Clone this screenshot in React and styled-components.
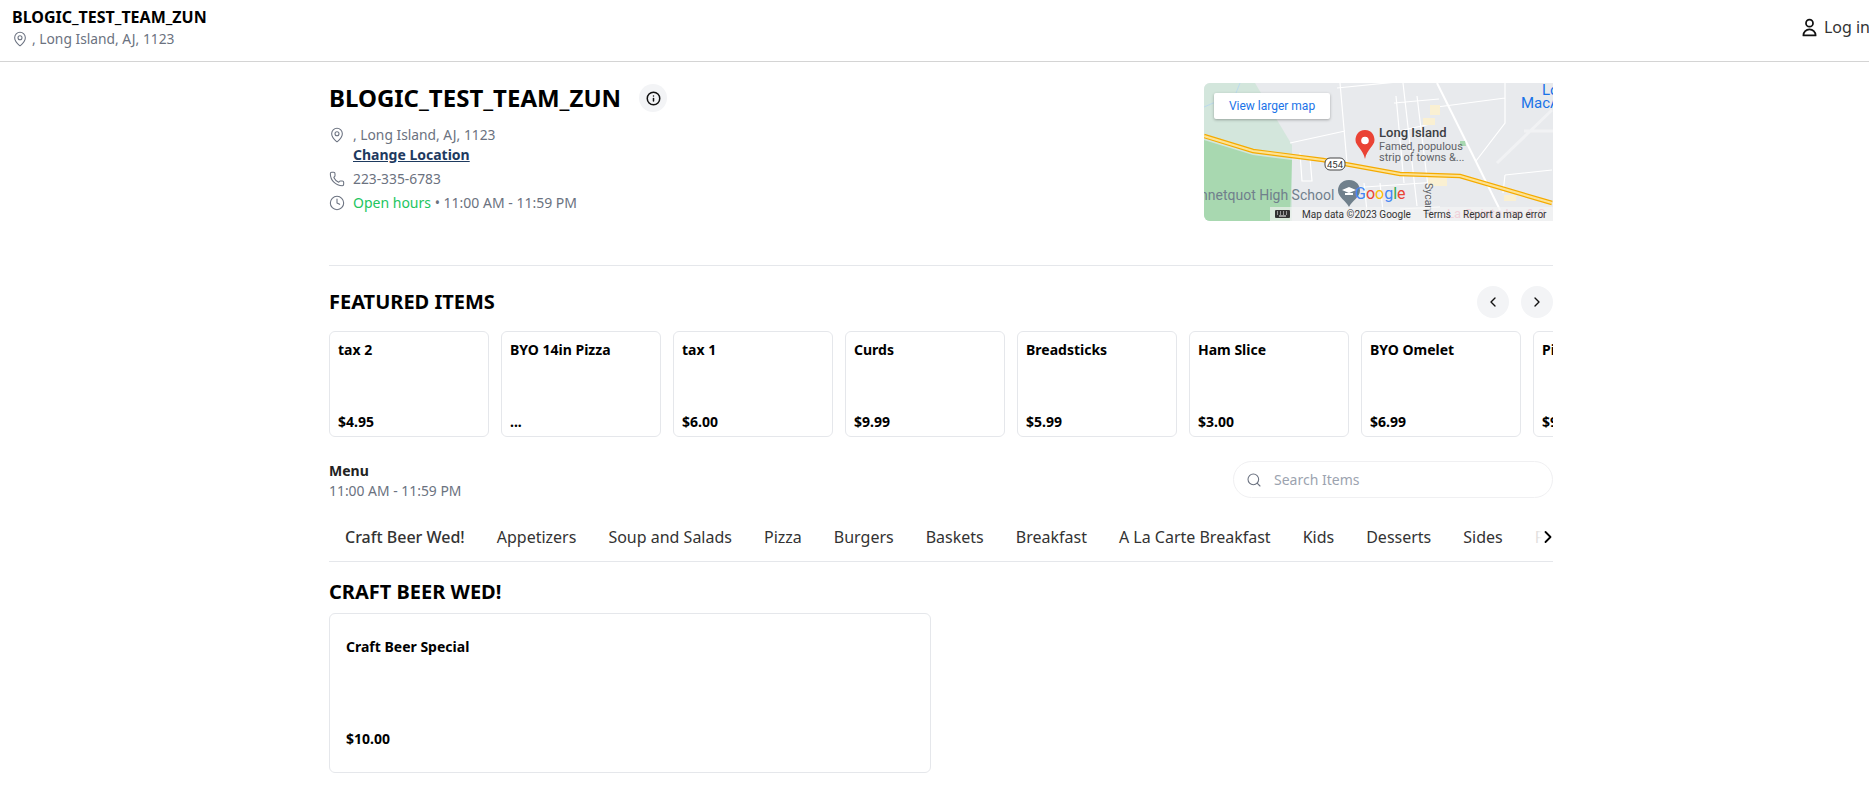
import React from 'react'
import styled, { createGlobalStyle } from 'styled-components'
import { ChevronLeft, ChevronRight, Clock, Info, MapPin, Phone, Search } from 'lucide-react'

const GlobalStyle = createGlobalStyle`
  html, body {
    margin: 0;
    padding: 0;
    background: #fff;
    overflow: hidden;
    font-family: "Noto Sans", "Open Sans", sans-serif;
    color: #000;
  }
`

const Header = styled.header`
  height: 61px;
  border-bottom: 1px solid #d4d4d4;
  display: flex;
  align-items: center;
  justify-content: space-between;
  padding-left: 12px;
  overflow: hidden;
`

const HeaderInfo = styled.div`
  display: flex;
  flex-direction: column;
  gap: 1px;
  margin-top: -6px;
`

const HeaderTitle = styled.div`
  font-size: 16px;
  line-height: 22px;
  font-weight: 700;
`

const HeaderAddress = styled.div`
  display: flex;
  align-items: center;
  gap: 4px;
  font-size: 13.8px;
  line-height: 20px;
  color: #6b7280;
`

const LoginLink = styled.div`
  display: flex;
  align-items: center;
  gap: 4px;
  font-size: 16px;
  color: #333;
  margin-right: -1px;
  margin-top: -7px;
  flex-shrink: 0;
`

const Page = styled.main`
  width: 1224px;
  margin-left: 329px;
`

const StoreInfo = styled.section`
  display: flex;
  justify-content: space-between;
  padding-top: 22px;
  height: 181px;
  box-sizing: content-box;
  border-bottom: 1px solid #e5e7eb;
`

const StoreHeading = styled.div`
  display: flex;
  align-items: center;
  gap: 18px;
  margin-bottom: 13px;
`

const StoreTitle = styled.h1`
  margin: 0;
  font-size: 24px;
  line-height: 28px;
  font-weight: 700;
`

const RoundButton = styled.button`
  width: ${({ size }) => size}px;
  height: ${({ size }) => size}px;
  border: 0;
  padding: 0;
  border-radius: 50%;
  background: #f3f4f6;
  color: #111;
  display: flex;
  align-items: center;
  justify-content: center;
`

const InfoRow = styled.div`
  display: grid;
  grid-template-columns: 24px 1fr;
  align-items: start;
  font-size: 13.8px;
  line-height: 20px;
  color: #6b7280;
  margin-bottom: 4px;
  & > svg {
    margin-top: 2px;
  }
`

const ChangeLocation = styled.a`
  display: block;
  font-weight: 700;
  font-size: 14px;
  color: #1e3a5f;
  text-decoration: underline;
`

const HoursText = styled.div`
  font-size: 14px;
`

const OpenHours = styled.span`
  color: #22c55e;
`

const MapFrame = styled.div`
  position: relative;
  width: 349px;
  height: 138px;
  margin-top: -1px;
  border-radius: 6px 0 0 6px;
  overflow: hidden;
  background: #e8eaed;
  font-family: Roboto, "Noto Sans", sans-serif;
`

const MapDrawing = styled.svg`
  display: block;
`

const LargerMap = styled.div`
  position: absolute;
  left: 10px;
  top: 10px;
  width: 116px;
  height: 26px;
  background: #fff;
  border-radius: 2px;
  box-shadow: 0 1px 3px rgba(0, 0, 0, 0.3);
  color: #1a73e8;
  font-size: 12px;
  display: flex;
  align-items: center;
  justify-content: center;
`

const MapBar = styled.div`
  position: absolute;
  right: 0;
  bottom: 0;
  width: 283px;
  height: 14px;
  background: rgba(245, 245, 245, 0.65);
  display: flex;
  align-items: center;
  padding-left: 5px;
  box-sizing: border-box;
  font-size: 10px;
  color: #333;
  white-space: nowrap;
`

const MapBarText = styled.span`
  margin-left: ${({ offset }) => offset}px;
`

const SectionHead = styled.div`
  display: flex;
  align-items: center;
  justify-content: space-between;
  height: 32px;
  margin-top: 20px;
`

const SectionTitle = styled.h2`
  margin: 0;
  font-size: 20px;
  line-height: 24px;
  font-weight: 700;
`

const CarouselButtons = styled.div`
  display: flex;
  gap: 12px;
`

const Carousel = styled.div`
  display: flex;
  gap: 12px;
  overflow: hidden;
  margin-top: 13px;
`

const ItemCard = styled.div`
  flex: 0 0 160px;
  height: 106px;
  box-sizing: border-box;
  border: 1px solid #e5e7eb;
  border-radius: 6px;
  padding: 8px 8px 4px;
  display: flex;
  flex-direction: column;
  justify-content: space-between;
  font-size: 14px;
  line-height: 20px;
  font-weight: 700;
  white-space: nowrap;
`

const MenuBar = styled.div`
  display: flex;
  justify-content: space-between;
  align-items: flex-start;
  margin-top: 24px;
`

const MenuName = styled.div`
  font-size: 14px;
  line-height: 20px;
  font-weight: 700;
  color: #222;
`

const MenuHours = styled.div`
  font-size: 13.9px;
  line-height: 20px;
  color: #6b7280;
`

const SearchBox = styled.div`
  width: 320px;
  height: 37px;
  box-sizing: border-box;
  border: 1px solid #f0f0f2;
  border-radius: 19px;
  display: flex;
  align-items: center;
  gap: 12px;
  padding-left: 12px;
  font-size: 14px;
  color: #9ca3af;
  & > svg {
    color: #6b7280;
  }
`

const Tabs = styled.nav`
  position: relative;
  display: flex;
  gap: 32px;
  height: 48px;
  margin-top: 12px;
  padding-left: 16px;
  align-items: center;
  overflow: hidden;
  border-bottom: 1px solid #e5e7eb;
  white-space: nowrap;
  font-size: 16px;
  color: #333;
`

const Tab = styled.span`
  font-weight: ${({ $active }) => ($active ? 500 : 400)};
`

const TabsMore = styled.div`
  position: absolute;
  right: -5px;
  top: 0;
  height: 47px;
  width: 26px;
  display: flex;
  align-items: center;
  justify-content: flex-end;
  color: #000;
  background: linear-gradient(to right, rgba(255, 255, 255, 0.7), #fff 40%);
`

const CategoryTitle = styled(SectionTitle)`
  margin-top: 18px;
`

const MenuCard = styled.div`
  width: 602px;
  height: 160px;
  box-sizing: border-box;
  margin-top: 9px;
  border: 1px solid #e5e7eb;
  border-radius: 6px;
  padding: 23px 16px 23px;
  display: flex;
  flex-direction: column;
  justify-content: space-between;
  font-size: 14px;
  line-height: 20px;
  font-weight: 700;
`

const featured = [
  ['tax 2', '$4.95'],
  ['BYO 14in Pizza', '...'],
  ['tax 1', '$6.00'],
  ['Curds', '$9.99'],
  ['Breadsticks', '$5.99'],
  ['Ham Slice', '$3.00'],
  ['BYO Omelet', '$6.99'],
  ['Pizza', '$9.99'],
]

const categories = ['Craft Beer Wed!', 'Appetizers', 'Soup and Salads', 'Pizza', 'Burgers', 'Baskets', 'Breakfast', 'A La Carte Breakfast', 'Kids', 'Desserts', 'Sides', 'Fountain']

const GoogleMap = () => (
  <MapDrawing width="349" height="138" viewBox="0 0 349 138">
    <path d="M0 0h51l37 62v76H0z" fill="#d3e6dc" />
    <path d="M0 57l49 15 39 5-2 61H0z" fill="#a8d8b0" />
    <path d="M0 24l14-6 16-3 6-15" stroke="#b6d7f2" strokeWidth="0.8" fill="none" />
    <g stroke="#fff" strokeWidth="1.2" fill="none">
      <path d="M136 0l7 80M86 60l55-12M96 70l2 28h10l-2-23" />
      <path d="M133 5l80-8M192 13l8 87M199 0l14 123M213 13l13 107M190 20l45-4M186 50l45-10" />
      <path d="M160 100l4 38M176 100l4 38M146 105l88-6M196 126l40-2" />
      <path d="M233 24l68-9M301 0v40l-29 38M301 92l47-5M301 92l-2 18" />
    </g>
    <path d="M233 0l63 127" stroke="#fff" strokeWidth="2" fill="none" />
    <path d="M293 80l55-53M320 48h29" stroke="#f1f2f4" strokeWidth="3" fill="none" />
    <path d="M226 22h10v10h-10zM219 35h12v7h-12zM224 94h19v9h-19zM300 112h12v6h-12z" fill="#faf0d2" />
    <path d="M256 58h5l1 5h-6z" fill="#a8d8b0" />
    <path d="M0 53l49 15 70 9 77 14 60 2 92 27" stroke="#f5ab00" strokeWidth="4.5" fill="none" />
    <path d="M0 53l49 15 70 9 77 14 60 2 92 27" stroke="#fde293" strokeWidth="2.2" fill="none" />
    <rect x="121" y="75" width="20" height="12" rx="5" fill="#fff" stroke="#444" />
    <text x="131" y="84.5" fontSize="9.5" textAnchor="middle" fill="#333">454</text>
    <path d="M161 47c-7 0-9.500 6-9.500 10 0 6 7.500 9 9.500 19 2-10 9.500-13 9.500-19 0-4-2.500-10-9.500-10z" fill="#ea4335" />
    <circle cx="161" cy="57.500" r="3.800" fill="#fff" />
    <text x="175" y="54" fontSize="13" fontWeight="500" fill="#3c4043">Long Island</text>
    <text x="175" y="67" fontSize="11" fill="#5f6368">Famed, populous</text>
    <text x="175" y="78" fontSize="11" fill="#5f6368">strip of towns &amp;...</text>
    <text x="-4" y="117" fontSize="14" fill="#70808c">nnetquot High School</text>
    <path d="M145 97c-8 0-11 6-11 10.500 0 7 8 10 11 16.500 3-6.500 11-9.500 11-16.500 0-4.500-3-10.500-11-10.500z" fill="#70808c" />
    <path d="M138 107l7-3 7 3-7 3zM141 110h8v2h-8z" fill="#fff" />
    <text x="151" y="116" fontSize="16">
      <tspan fill="#4285f4">G</tspan>
      <tspan fill="#ea4335">o</tspan>
      <tspan fill="#fbbc05">o</tspan>
      <tspan fill="#4285f4">g</tspan>
      <tspan fill="#34a853">l</tspan>
      <tspan fill="#ea4335">e</tspan>
    </text>
    <text x="338" y="12" fontSize="15" fill="#1a73e8">Lo</text>
    <text x="317" y="25" fontSize="15" fill="#1a73e8">MacA</text>
    <text transform="translate(221 100) rotate(90)" fontSize="10.500" fill="#5f6368">Sycam</text>
    <text x="243" y="135" fontSize="13" fill="#e58fa5">La Quinta Inn &amp; S</text>
  </MapDrawing>
)

const KeyboardIcon = () => (
  <svg width="15" height="8" viewBox="0 0 15 8">
    <rect width="15" height="8" rx="1" fill="#333" />
    <path d="M2 2h1M5 2h1M8 2h1M11 2h1M2 4h1M5 4h1M8 4h1M11 4h1M4 6h7" stroke="#fff" strokeWidth="1" />
  </svg>
)

const UserIcon = () => (
  <svg width="21" height="21" viewBox="0 0 24 24" fill="none" stroke="#111" strokeWidth="2" strokeLinejoin="round">
    <circle cx="12" cy="7" r="4" />
    <path d="M12 14a7 7 0 0 0-7 7h14a7 7 0 0 0-7-7z" />
  </svg>
)

const App = () => (
  <>
    <GlobalStyle />
    <Header>
      <HeaderInfo>
        <HeaderTitle>BLOGIC_TEST_TEAM_ZUN</HeaderTitle>
        <HeaderAddress>
          <MapPin size={16} strokeWidth={1.6} />
          , Long Island, AJ, 1123
        </HeaderAddress>
      </HeaderInfo>
      <LoginLink>
        <UserIcon />
        Log in
      </LoginLink>
    </Header>
    <Page>
      <StoreInfo>
        <div>
          <StoreHeading>
            <StoreTitle>BLOGIC_TEST_TEAM_ZUN</StoreTitle>
            <RoundButton size={28}><Info size={15} strokeWidth={2.4} /></RoundButton>
          </StoreHeading>
          <InfoRow>
            <MapPin size={16} strokeWidth={1.6} />
            <div>
              , Long Island, AJ, 1123
              <ChangeLocation>Change Location</ChangeLocation>
            </div>
          </InfoRow>
          <InfoRow>
            <Phone size={16} strokeWidth={1.6} />
            <div>223-335-6783</div>
          </InfoRow>
          <InfoRow>
            <Clock size={16} strokeWidth={1.6} />
            <HoursText><OpenHours>Open hours</OpenHours> • 11:00 AM - 11:59 PM</HoursText>
          </InfoRow>
        </div>
        <MapFrame>
          <GoogleMap />
          <LargerMap>View larger map</LargerMap>
          <MapBar>
            <KeyboardIcon />
            <MapBarText offset={12}>Map data ©2023 Google</MapBarText>
            <MapBarText offset={12}>Terms</MapBarText>
            <MapBarText offset={12}>Report a map error</MapBarText>
          </MapBar>
        </MapFrame>
      </StoreInfo>
      <SectionHead>
        <SectionTitle>FEATURED ITEMS</SectionTitle>
        <CarouselButtons>
          <RoundButton size={32}><ChevronLeft size={16} /></RoundButton>
          <RoundButton size={32}><ChevronRight size={16} /></RoundButton>
        </CarouselButtons>
      </SectionHead>
      <Carousel>
        {featured.map(([name, price]) => (
          <ItemCard key={name}>
            <div>{name}</div>
            <div>{price}</div>
          </ItemCard>
        ))}
      </Carousel>
      <MenuBar>
        <div>
          <MenuName>Menu</MenuName>
          <MenuHours>11:00 AM - 11:59 PM</MenuHours>
        </div>
        <SearchBox>
          <Search size={16} strokeWidth={1.6} />
          Search Items
        </SearchBox>
      </MenuBar>
      <Tabs>
        {categories.map((name, i) => <Tab key={name} $active={i === 0}>{name}</Tab>)}
        <TabsMore><ChevronRight size={20} strokeWidth={2.2} /></TabsMore>
      </Tabs>
      <CategoryTitle>CRAFT BEER WED!</CategoryTitle>
      <MenuCard>
        <div>Craft Beer Special</div>
        <div>$10.00</div>
      </MenuCard>
    </Page>
  </>
)

export default App
